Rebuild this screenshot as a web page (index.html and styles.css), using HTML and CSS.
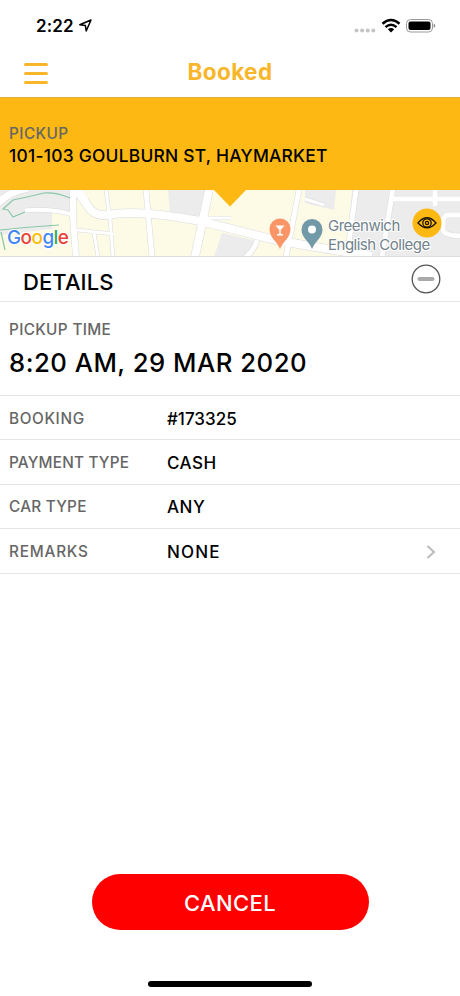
FILE: index.html
```html
<!DOCTYPE html>
<html lang="en">
<head>
<meta charset="utf-8">
<title>Booked</title>
<link rel="stylesheet" href="styles.css">
</head>
<body>
<main class="screen">
  <div class="status">
    <span class="time">2:22</span>
    <svg class="location" width="13" height="13" viewBox="0 0 13 13"><path d="M.8 5.700 12 1 7.200 12 6.400 6.600Z"/></svg>
    <svg class="signal" width="82" height="16" viewBox="0 0 82 16">
      <g fill="#c4c4c4"><circle cx="2.500" cy="12.500" r="2"/><circle cx="8.100" cy="12.500" r="2"/><circle cx="13.700" cy="12.500" r="2"/><circle cx="19.300" cy="12.500" r="2"/></g>
      <g fill="none" stroke="#000" stroke-width="2.500"><path d="M28.500 5.800Q37-1.800 45.500 5.800"/><path d="M31.500 9.100Q37 4.300 42.500 9.100"/></g>
      <path d="M33.800 11.300Q37 8.700 40.200 11.300L37 14.500Z"/>
      <rect x="52.500" y="1.500" width="26" height="12.500" rx="4" fill="none" stroke="#999"/>
      <rect x="54.500" y="3.500" width="22" height="8.500" rx="2"/>
      <path d="M79.700 5.700q1.600.6 1.600 2t-1.600 2Z" fill="#888"/>
    </svg>
  </div>
  <header class="nav">
    <button class="menu" aria-label="Menu"><i></i><i></i><i></i></button>
    <h1>Booked</h1>
  </header>
  <section class="pickup">
    <span class="label pickup-label">PICKUP</span>
    <strong class="address">101-103 GOULBURN ST, HAYMARKET</strong>
  </section>
  <section class="map">
    <svg class="streets" width="460" height="67" viewBox="0 0 460 67">
      <rect width="460" height="67" fill="#fdfae6"/>
      <g fill="#ececed">
        <path d="M0 0H73V22H52V39L0 45Z"/><path d="M168 0H208L203 29 170 23Z"/><path d="M222 43 257 51 248 67H214Z"/>
        <path d="M352 0H460V67H346Z"/><path d="M305 0H336L334 20 305 13Z"/>
      </g>
      <g class="edge">
        <path stroke-width="8" d="M-3 14Q8 2 28-2"/>
        <path stroke-width="5" d="M25 20.500Q50 18 74 25"/>
        <path stroke-width="7" d="M73 0V28L76 67"/>
        <path stroke-width="9" d="M75 0C89 11 86 27 109 25Q136 19 200 31L267 48Q300 55 372 66"/>
        <path stroke-width="4" d="M106 0 109 23M77 40 114 44M94 43 98 67M110 28 113 67"/>
        <path stroke-width="6" d="M146 0 152 67M257 50Q255 59 246 67M299 0 286 67"/>
        <path stroke-width="9" d="M209 0 195 67"/>
        <path stroke-width="4" d="M207 28H231M305 9 324 15"/>
        <path stroke-width="6" d="M356 0 347 67M393-2 382 67M393 9H460M435 0V16M460 25H449Q443 25 443 32V40Q443 45 460 46"/>
      </g>
      <g class="road">
        <path stroke-width="7" d="M-3 14Q8 2 28-2"/>
        <path stroke-width="4" d="M25 20.500Q50 18 74 25"/>
        <path stroke-width="6" d="M73 0V28L76 67"/>
        <path stroke-width="8" d="M75 0C89 11 86 27 109 25Q136 19 200 31L267 48Q300 55 372 66"/>
        <path stroke-width="3" d="M106 0 109 23M77 40 114 44M94 43 98 67M110 28 113 67"/>
        <path stroke-width="5" d="M146 0 152 67M257 50Q255 59 246 67M299 0 286 67"/>
        <path stroke-width="8" d="M209 0 195 67"/>
        <path stroke-width="3" d="M207 28H231M305 9 324 15"/>
        <path stroke-width="5" d="M356 0 347 67M393-2 382 67M393 9H460M435 0V16M460 25H449Q443 25 443 32V40Q443 45 460 46"/>
        <path stroke-width="6" d="M78 0 86 10"/>
      </g>
      <g fill="none" stroke="#88c7a7" stroke-width="1.200"><path d="M70 8Q56 2 44 3 28 7 13 10L3 19 8 20 13 27 25 22"/><path d="M0 40Q28 37 59 35M1 42 5 60"/></g>
      <path d="M214 0H246L230 16.500Z" fill="#fdb813"/>
      <path d="M280 59C277 51 269.500 48 269.500 39A10.500 10.500 0 0 1 290.500 39C290.500 48 283 51 280 59Z" fill="#fa9568"/>
      <path d="M275.500 35.500H284.500L280.700 40V44H283V45.500H277V44H279.300V40Z" fill="#fff"/>
      <path d="M312 59C309 51 301.500 48 301.500 39.500A10.500 10.500 0 0 1 322.500 39.500C322.500 48 315 51 312 59Z" fill="#7199a8"/>
      <circle cx="312" cy="39.500" r="4" fill="#fff"/>
    </svg>
    <span class="google" aria-label="Google"><b class="blue">G</b><b class="red">o</b><b class="yellow">o</b><b class="blue">g</b><b class="green">l</b><b class="red">e</b></span>
    <span class="place">Greenwich<br>English College</span>
    <svg class="eye" width="30" height="30" viewBox="0 0 30 30"><circle cx="15" cy="15" r="14.500" fill="#fdb813"/><g fill="none" stroke="#1c1606" stroke-width="1.300"><path d="M6 15Q15 4.500 24 15 15 24.500 6 15Z"/><circle cx="15" cy="15" r="4.200"/><circle cx="15" cy="15" r="1.600"/></g></svg>
  </section>
  <section class="details">
    <h2>DETAILS</h2>
    <svg class="collapse" width="30" height="30" viewBox="0 0 30 30"><circle cx="15" cy="15" r="13.800" fill="none" stroke="#555" stroke-width="1.300"/><rect x="6.500" y="12.900" width="17" height="4.200" rx="2" fill="#aaa"/></svg>
  </section>
  <section class="pickup-time">
    <span class="label time-label">PICKUP TIME</span>
    <strong class="date">8:20 AM, 29 MAR 2020</strong>
  </section>
  <dl class="rows">
    <div class="row booking"><dt>BOOKING</dt><dd>#173325</dd></div>
    <div class="row payment"><dt>PAYMENT TYPE</dt><dd>CASH</dd></div>
    <div class="row car"><dt>CAR TYPE</dt><dd>ANY</dd></div>
    <div class="row remarks"><dt>REMARKS</dt><dd>NONE</dd><svg class="chevron" width="10" height="14" viewBox="0 0 10 14"><path d="M1.500 1 8 7 1.500 13"/></svg></div>
  </dl>
  <footer class="actions">
    <button class="cancel">CANCEL</button>
    <div class="home"></div>
  </footer>
</main>
</body>
</html>
```
FILE: styles.css
```css
* { box-sizing: border-box; margin: 0; padding: 0; }
body { background: #fff; color: #000; font-family: Inter, "Liberation Sans", sans-serif; }
button { border: 0; background: none; font: inherit; }
.screen { width: 460px; height: 996px; display: flex; flex-direction: column; overflow: hidden; }
.status { height: 49px; padding: 2px 24px 0 36px; display: flex; align-items: center; flex: none; }
.time { font-size: 17px; font-weight: 600; letter-spacing: .1px; }
.location { margin-left: 5px; fill: none; stroke: #000; stroke-width: 1.5; stroke-linejoin: round; }
.signal { margin-left: auto; }
.nav { height: 49px; display: grid; grid-template-columns: 48px 1fr 48px; align-items: center; flex: none; border-bottom: 1px solid #e7b03a; }
.menu { margin-left: 24px; width: 24px; display: grid; gap: 6px; }
.menu i { height: 3px; border-radius: 2px; background: #f8b62b; }
h1 { color: #f8b62b; text-align: center; font-size: 22.5px; font-weight: 700; line-height: 30px; letter-spacing: .4px; padding-bottom: 2px; }
.pickup { height: 92px; background: #fdb813; padding: 26px 9px 0; display: flex; flex-direction: column; flex: none; }
.label, dt { font-size: 15.3px; line-height: 20px; color: #666; font-weight: 450; }
.pickup-label { letter-spacing: .45px; }
.time-label { letter-spacing: .35px; }
.address { font-size: 17.4px; line-height: 24px; font-weight: 500; letter-spacing: .25px; white-space: nowrap; }
.map { height: 67px; position: relative; flex: none; border-bottom: 1px solid #ddd; overflow: hidden; }
.streets { display: block; }
.edge, .road { fill: none; stroke: #fff; }
.edge { stroke: #d9dadd; }
.google { position: absolute; left: 7px; top: 35px; font-size: 19px; line-height: 26px; letter-spacing: -.6px; -webkit-text-stroke: 2px #fff; paint-order: stroke fill; }
.google b { font-weight: 500; }
.blue { color: #4285f4; }
.red { color: #ea4335; }
.yellow { color: #fbbc05; }
.green { color: #34a853; }
.place { position: absolute; left: 328px; top: 27px; font-size: 15px; line-height: 18.5px; letter-spacing: -.5px; color: #71828b; white-space: nowrap; -webkit-text-stroke: 2px #fff; paint-order: stroke fill; }
.eye { position: absolute; left: 412px; top: 18px; }
.details { height: 45px; padding: 0 19px 0 23px; display: flex; align-items: center; justify-content: space-between; flex: none; border-bottom: 1px solid #e5e5e5; }
h2 { font-size: 22px; line-height: 28px; font-weight: 500; letter-spacing: .1px; padding-top: 5px; }
.pickup-time { height: 94px; padding: 18px 9px 0; display: flex; flex-direction: column; flex: none; border-bottom: 1px solid #e5e5e5; }
.date { font-size: 25.7px; line-height: 34px; margin-top: 6px; font-weight: 500; letter-spacing: .5px; white-space: nowrap; }
.row { height: 44.4px; padding: 2px 24px 0 9px; display: grid; grid-template-columns: 158px 1fr auto; align-items: center; border-bottom: 1px solid #e5e5e5; }
dd { font-size: 17px; line-height: 24px; font-weight: 500; }
.booking dt { letter-spacing: .65px; }
.payment dt { letter-spacing: .2px; }
.car dt { letter-spacing: .25px; }
.payment dd, .car dd { letter-spacing: .5px; }
.remarks dt { letter-spacing: .8px; }
.remarks dd { letter-spacing: 1.2px; }
.chevron { fill: none; stroke: #bbb; stroke-width: 2; }
.actions { margin-top: auto; display: flex; flex-direction: column; align-items: center; }
.cancel { width: 277px; height: 56px; border-radius: 28px; background: #f00; color: #fff; font-size: 22px; line-height: 56px; padding-top: 1px; font-weight: 500; letter-spacing: .4px; }
.home { width: 164px; height: 6px; border-radius: 3px; background: #000; margin: 51px 0 9px; }
```
